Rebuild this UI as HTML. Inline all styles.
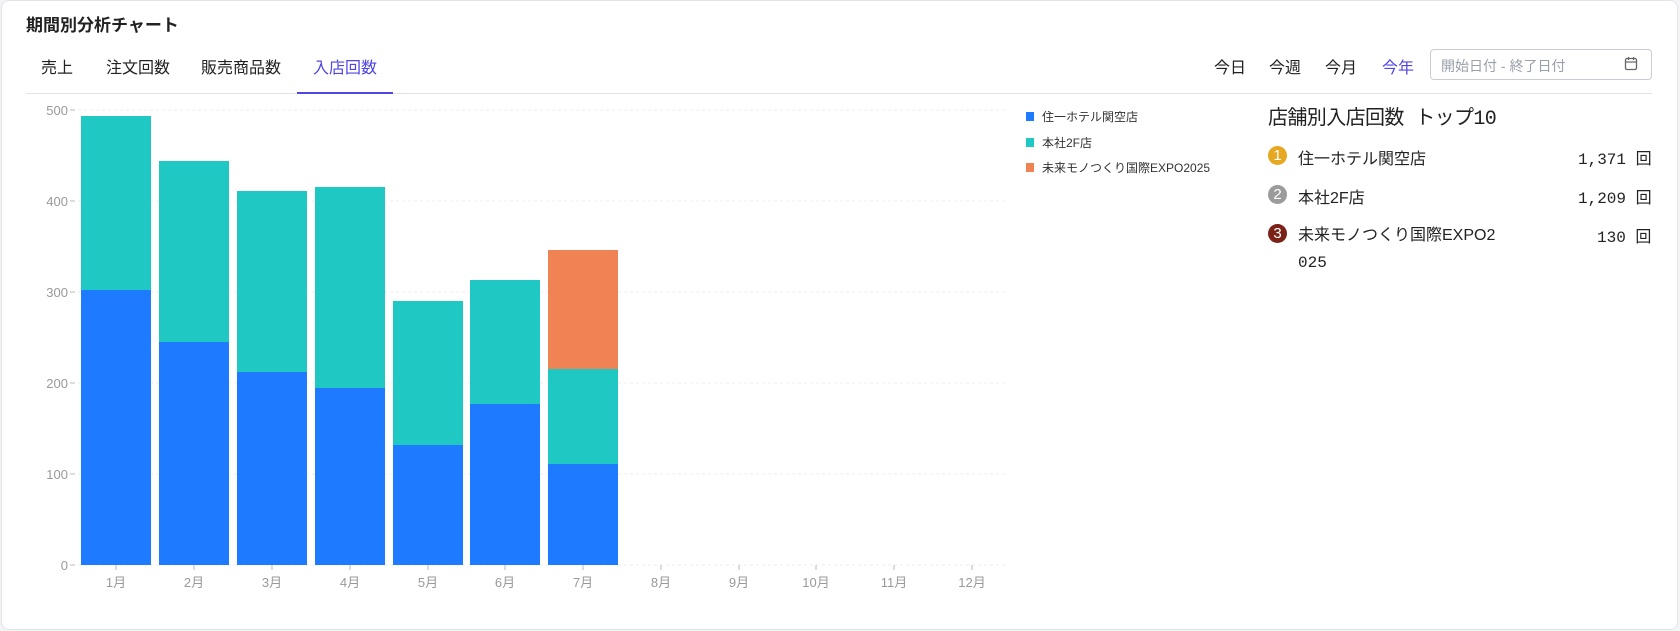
<!DOCTYPE html>
<html><head><meta charset="utf-8"><style>
*{margin:0;padding:0;box-sizing:border-box}
body{width:1680px;height:631px;background:#f3f4f6;font-family:"Liberation Sans","Noto Sans CJK JP",sans-serif;color:#222;position:relative;overflow:hidden}
.card{position:absolute;left:1px;top:0;width:1677px;height:630px;background:#fff;border:1px solid #e3e4e8;border-radius:8px}
.t{position:absolute;white-space:nowrap}
.mono{font-family:"Liberation Mono","Noto Sans CJK JP",monospace}
.badge{position:absolute;width:19px;height:19px;border-radius:50%;color:#fff;font-size:15px;text-align:center;line-height:19px}
</style></head><body>
<div class="card"></div>
<div class="t" style="left:26px;top:11px;font-size:17px;font-weight:bold;color:#222">期間別分析チャート</div>
<div class="t" style="left:41px;top:54px;font-size:16px">売上</div>
<div class="t" style="left:106px;top:54px;font-size:16px">注文回数</div>
<div class="t" style="left:201px;top:54px;font-size:16px">販売商品数</div>
<div class="t" style="left:313px;top:54px;font-size:16px;color:#5046e5">入店回数</div>
<div style="position:absolute;left:26px;top:93px;width:1626px;height:1px;background:#e3e4e8"></div>
<div style="position:absolute;left:297px;top:92px;width:96px;height:2px;background:#5046e5"></div>
<div class="t" style="left:1214px;top:54px;font-size:16px">今日</div>
<div class="t" style="left:1269px;top:54px;font-size:16px">今週</div>
<div class="t" style="left:1325px;top:54px;font-size:16px">今月</div>
<div class="t" style="left:1382px;top:54px;font-size:16px;color:#5046e5">今年</div>
<div style="position:absolute;left:1430px;top:49px;width:222px;height:31px;border:1px solid #c9ccd4;border-radius:4px"></div>
<div class="t" style="left:1441px;top:56px;font-size:14px;color:#9aa0ab">開始日付 - 終了日付</div>
<svg style="position:absolute;left:1624px;top:56px" width="14" height="15" viewBox="0 0 14 15"><rect x="1.5" y="2.5" width="11" height="11" rx="1.5" fill="none" stroke="#666" stroke-width="1.3"/><line x1="1.5" y1="6" x2="12.5" y2="6" stroke="#666" stroke-width="1.2"/><line x1="4.5" y1="1" x2="4.5" y2="4" stroke="#666" stroke-width="1.3"/><line x1="9.5" y1="1" x2="9.5" y2="4" stroke="#666" stroke-width="1.3"/></svg>

<svg style="position:absolute;left:0;top:0" width="1020" height="631" font-family="Liberation Sans, Noto Sans CJK JP, sans-serif" font-size="13" fill="#999">
<g stroke="#ececec" stroke-dasharray="3,3">
<line x1="78" y1="110" x2="1008" y2="110"/><line x1="78" y1="201" x2="1008" y2="201"/><line x1="78" y1="292" x2="1008" y2="292"/><line x1="78" y1="383" x2="1008" y2="383"/><line x1="78" y1="474" x2="1008" y2="474"/><line x1="78" y1="565" x2="1008" y2="565"/>
</g>
<g stroke="#bbb"><line x1="70" y1="110" x2="75" y2="110"/><line x1="70" y1="201" x2="75" y2="201"/><line x1="70" y1="292" x2="75" y2="292"/><line x1="70" y1="383" x2="75" y2="383"/><line x1="70" y1="474" x2="75" y2="474"/><line x1="70" y1="565" x2="75" y2="565"/></g>
<g text-anchor="end"><text x="68" y="115">500</text><text x="68" y="206">400</text><text x="68" y="297">300</text><text x="68" y="388">200</text><text x="68" y="479">100</text><text x="68" y="570">0</text></g>
<g>
<rect x="81" y="116" width="70" height="174" fill="#1fc8c3"/><rect x="81" y="290" width="70" height="275" fill="#1e7bff"/>
<rect x="159" y="161" width="70" height="182" fill="#1fc8c3"/><rect x="159" y="342" width="70" height="223" fill="#1e7bff"/>
<rect x="237" y="191" width="70" height="182" fill="#1fc8c3"/><rect x="237" y="372" width="70" height="193" fill="#1e7bff"/>
<rect x="315" y="187" width="70" height="202" fill="#1fc8c3"/><rect x="315" y="388" width="70" height="177" fill="#1e7bff"/>
<rect x="393" y="301" width="70" height="144" fill="#1fc8c3"/><rect x="393" y="445" width="70" height="120" fill="#1e7bff"/>
<rect x="470" y="280" width="70" height="125" fill="#1fc8c3"/><rect x="470" y="404" width="70" height="161" fill="#1e7bff"/>
<rect x="548" y="250" width="70" height="120" fill="#ef8354"/><rect x="548" y="369" width="70" height="96" fill="#1fc8c3"/><rect x="548" y="464" width="70" height="101" fill="#1e7bff"/>
</g>
<g stroke="#bbb"><line x1="116" y1="565" x2="116" y2="570"/><line x1="194" y1="565" x2="194" y2="570"/><line x1="272" y1="565" x2="272" y2="570"/><line x1="350" y1="565" x2="350" y2="570"/><line x1="428" y1="565" x2="428" y2="570"/><line x1="505" y1="565" x2="505" y2="570"/><line x1="583" y1="565" x2="583" y2="570"/><line x1="661" y1="565" x2="661" y2="570"/><line x1="739" y1="565" x2="739" y2="570"/><line x1="816" y1="565" x2="816" y2="570"/><line x1="894" y1="565" x2="894" y2="570"/><line x1="972" y1="565" x2="972" y2="570"/></g>
<g text-anchor="middle"><text x="116" y="587">1月</text><text x="194" y="587">2月</text><text x="272" y="587">3月</text><text x="350" y="587">4月</text><text x="428" y="587">5月</text><text x="505" y="587">6月</text><text x="583" y="587">7月</text><text x="661" y="587">8月</text><text x="739" y="587">9月</text><text x="816" y="587">10月</text><text x="894" y="587">11月</text><text x="972" y="587">12月</text></g>
</svg>
<div style="position:absolute;left:1026px;top:112px;width:8px;height:9px;background:#1e7bff"></div>
<div class="t" style="left:1042px;top:108px;font-size:12px;color:#333">住一ホテル関空店</div>
<div style="position:absolute;left:1026px;top:138px;width:8px;height:9px;background:#1fc8c3"></div>
<div class="t" style="left:1042px;top:134px;font-size:12px;color:#333">本社2F店</div>
<div style="position:absolute;left:1026px;top:163px;width:8px;height:9px;background:#ef8354"></div>
<div class="t" style="left:1042px;top:159px;font-size:12px;color:#333">未来モノつくり国際EXPO2025</div>

<div class="t mono" style="left:1268px;top:101px;font-size:20px;color:#222;letter-spacing:-0.6px">店舗別入店回数 トップ10</div>
<div class="badge" style="left:1268px;top:146px;background:#e6a820">1</div>
<div class="t" style="left:1298px;top:145px;font-size:16px">住一ホテル関空店</div>
<div class="t mono" style="left:1578px;top:145px;font-size:16px">1,371 回</div>
<div class="badge" style="left:1268px;top:185px;background:#9b9b9b">2</div>
<div class="t" style="left:1298px;top:184px;font-size:16px">本社2F店</div>
<div class="t mono" style="left:1578px;top:184px;font-size:16px">1,209 回</div>
<div class="badge" style="left:1268px;top:224px;background:#7a2218">3</div>
<div class="t" style="left:1298px;top:222px;font-size:16px;line-height:27px">未来モノつくり国際EXPO2<br><span class="mono">025</span></div>
<div class="t mono" style="left:1597px;top:223px;font-size:16px">130 回</div>
</body></html>
